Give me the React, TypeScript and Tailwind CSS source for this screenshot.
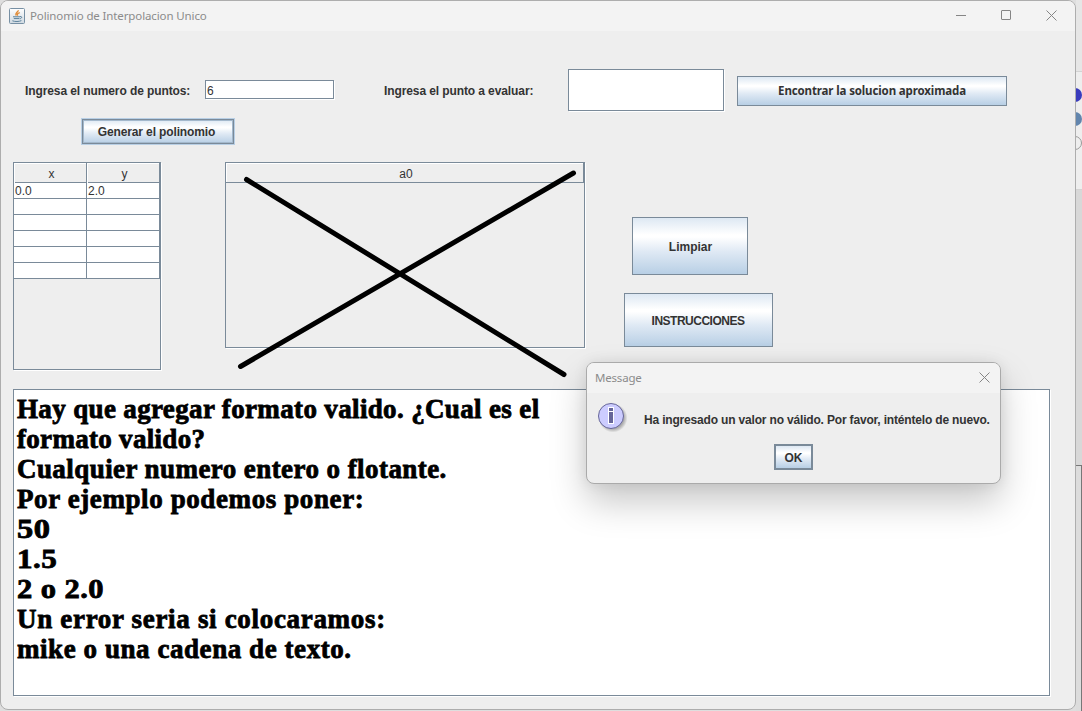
import type { ReactNode } from "react";

const sans = "font-['Liberation_Sans',Arial,sans-serif]";
const system = "font-['Noto_Sans','Open_Sans',sans-serif]";

function MetalButton({ className, children }: { className: string; children: ReactNode }) {
  return (
    <button
      className={`flex shrink-0 items-center justify-center whitespace-nowrap border border-[#7a8a99] bg-[linear-gradient(to_bottom,#dde8f3_0%,#ffffff_30%,#ffffff_34%,#dfe9f4_60%,#b8cfe5_100%)] font-bold text-[#333] ${className}`}
    >
      {children}
    </button>
  );
}

function JavaIcon() {
  return (
    <svg width="16" height="16" viewBox="0 0 16 16" className="shrink-0" fill="none">
      <defs>
        <linearGradient id="tile" x1="0" y1="0" x2="0" y2="1">
          <stop offset="0" stopColor="#fff" />
          <stop offset="1" stopColor="#cfd9e1" />
        </linearGradient>
      </defs>
      <rect x="0.5" y="0.5" width="15" height="15" rx="1" fill="url(#tile)" stroke="#7790a4" />
      <path d="M9.4 2.2C9.4 4 5.4 4.9 7.3 7.6M10.8 4.6C8.2 5.3 8 6.2 8.8 7.6" stroke="#e08a35" strokeWidth="1.3" />
      <path d="M4 8.8H11M4.8 10.6H10.4M11 8.6C13.4 8 13.2 10.4 10.8 10.8M3.4 12.8C6 13.8 10 13.7 12.4 12.6" stroke="#5b819b" strokeWidth="1" />
    </svg>
  );
}

function CloseIcon() {
  return (
    <svg width="11" height="11" viewBox="0 0 11 11" fill="none" stroke="#858585">
      <path d="M0.5 0.5L10.5 10.5M10.5 0.5L0.5 10.5" />
    </svg>
  );
}

function InfoIcon() {
  return (
    <svg width="32" height="32" viewBox="0 0 32 32" className="shrink-0">
      <defs>
        <radialGradient id="shade">
          <stop offset="0.75" stopColor="#777" stopOpacity="0.55" />
          <stop offset="1" stopColor="#777" stopOpacity="0" />
        </radialGradient>
      </defs>
      <circle cx="16" cy="16" r="14.5" fill="url(#shade)" />
      <circle cx="14" cy="14" r="12.5" fill="#ccccff" stroke="#666699" />
      <rect x="11.5" y="5.5" width="5" height="4" fill="#666699" stroke="#fff" />
      <rect x="11.5" y="9.5" width="5" height="12" fill="#666699" stroke="#fff" />
    </svg>
  );
}

const notes = [
  { text: "Hay que agregar formato valido. ¿Cual es el", fit: "tracking-[0.35px]" },
  { text: "formato valido?", fit: "tracking-[0.3px]" },
  { text: "Cualquier numero entero o flotante.", fit: "tracking-[0.43px]" },
  { text: "Por ejemplo podemos poner:", fit: "tracking-[0.6px]" },
  { text: "50", fit: "scale-x-[1.2] tracking-[0.4px]" },
  { text: "1.5", fit: "scale-x-[1.15] tracking-[0.4px]" },
  { text: "2 o 2.0", fit: "scale-x-[1.13] tracking-[0.4px]" },
  { text: "Un error seria si colocaramos:", fit: "tracking-[0.68px]" },
  { text: "mike o una cadena de texto.", fit: "tracking-[0.56px]" },
];

const points = [["0.0", "2.0"], ["", ""], ["", ""], ["", ""], ["", ""], ["", ""]];

function PointsTable() {
  return (
    <div className="h-[208px] w-[148px] shrink-0 border border-[#7a8a99] shadow-[1px_1px_0_#fff]">
      <div className="grid h-[20px] grid-cols-[73px_73px] border-b border-[#7a8a99] text-center leading-[22px]">
        <div className="border-r border-[#7a8a99] pl-[3px] shadow-[inset_1px_1px_0_#fff]">x</div>
        <div className="border-r border-[#7a8a99] pl-[3px] shadow-[inset_1px_1px_0_#fff]">y</div>
      </div>
      {points.map((row, i) => (
        <div key={i} className="grid h-4 grid-cols-[73px_73px] bg-white leading-[17px]">
          {row.map((cell, j) => (
            <div key={j} className="h-4 border-b border-r border-[#7a8a99] pl-px">{cell}</div>
          ))}
        </div>
      ))}
    </div>
  );
}

function MessageDialog() {
  return (
    <div className="absolute left-[586px] top-[362px] flex h-[122px] w-[415px] flex-col overflow-hidden rounded-lg border border-[#aaa] bg-[#eeeeee] shadow-[0_18px_36px_rgba(0,0,0,0.22),0_0_14px_rgba(0,0,0,0.08)]">
      <div className="flex h-[30px] shrink-0 items-center justify-between bg-[#f3f3f3] pl-2 pr-[10px]">
        <span className={`${system} text-[11.5px] tracking-[-0.2px] text-[#8b8b8b]`}>Message</span>
        <span className="pb-[2px]"><CloseIcon /></span>
      </div>
      <div className="flex h-[51px] items-start pl-[10px] pt-[9px]">
        <InfoIcon />
        <span className="ml-[15px] mt-[10px] whitespace-nowrap text-[12px] font-bold leading-4 tracking-[-0.175px]">
          Ha ingresado un valor no válido. Por favor, inténtelo de nuevo.
        </span>
      </div>
      <MetalButton className="ml-[187px] h-[26px] w-[39px] border-2 pt-px">OK</MetalButton>
    </div>
  );
}

export default function App() {
  return (
    <div className={`relative flex h-[711px] w-[1082px] overflow-hidden bg-[#dedede] text-[12px] text-[#333] ${sans}`}>
      <main className="z-10 flex h-[710px] w-[1076px] shrink-0 flex-col overflow-hidden rounded-lg border border-[#adadad] bg-[#eeeeee]">
        <header className="flex h-[30px] shrink-0 items-center bg-[#f3f3f3] pl-2">
          <JavaIcon />
          <h1 className={`ml-[5px] text-[11.5px] tracking-[-0.12px] text-[#8b8b8b] ${system}`}>Polinomio de Interpolacion Unico</h1>
          <div className="ml-auto flex items-center gap-[35px] pb-px pr-[18px]">
            <span className="h-px w-[10px] bg-[#858585]" />
            <span className="mb-px size-[10px] rounded-[1px] border border-[#858585]" />
            <CloseIcon />
          </div>
        </header>

        <div className="mt-[38px] flex h-[42px] shrink-0 items-center pl-6">
          <label className="w-[180px] pt-px font-bold tracking-[-0.1px]">Ingresa el numero de puntos:</label>
          <div className="mb-px h-[19px] w-[129px] border border-[#7a8a99] bg-white pl-px leading-[20px] shadow-[1px_1px_0_#fff]">6</div>
          <label className="ml-[50px] w-[184px] pt-px font-bold tracking-[-0.1px]">Ingresa el punto a evaluar:</label>
          <div className="h-[42px] w-[156px] border border-[#7a8a99] bg-white shadow-[1px_1px_0_#fff]" />
          <MetalButton className={`ml-[13px] mt-[2px] h-[30px] w-[270px] text-[11.5px] tracking-[-0.13px] ${system}`}>Encontrar la solucion aproximada</MetalButton>
        </div>

        <MetalButton className="ml-[81px] mt-2 h-[25px] w-[152px] pr-[3px] tracking-[-0.13px] shadow-[0_0_0_1px_#b8cfe5,inset_0_0_0_1px_#a3b8cc]">Generar el polinomio</MetalButton>

        <div className="mt-[18px] flex h-[227px] shrink-0 items-start pl-3">
          <PointsTable />
          <div className="ml-16 h-[186px] w-[360px] shrink-0 border border-[#7a8a99] shadow-[1px_1px_0_#fff]">
            <div className="h-[20px] border-b border-r border-[#7a8a99] pl-[3px] text-center leading-[22px] shadow-[inset_1px_1px_0_#fff]">a0</div>
          </div>
          <div className="ml-[39px] mt-[55px] flex w-[149px] flex-col gap-[18px]">
            <MetalButton className="ml-2 h-[58px] w-[116px] pl-px pt-[2px]">Limpiar</MetalButton>
            <MetalButton className="h-[54px] w-[149px] pr-px pt-[2px] tracking-[-0.5px]">INSTRUCCIONES</MetalButton>
          </div>
        </div>

        <section className="ml-3 h-[307px] w-[1037px] shrink-0 border border-[#7a8a99] bg-white pl-[3px] pt-1 font-['Liberation_Serif','Times_New_Roman',serif] text-[27px] font-bold leading-[30px] text-black shadow-[1px_1px_0_#fff] [-webkit-text-stroke:0.8px_#000]">
          {notes.map((line) => (
            <p key={line.text} className={`h-[30px] w-fit origin-left whitespace-nowrap ${line.fit}`}>{line.text}</p>
          ))}
        </section>
      </main>

      <aside className="flex w-[6px] shrink-0 flex-col">
        <div className="h-[71px] bg-[#e6e6e6]" />
        <div className="flex h-[119px] flex-col items-end gap-[10px] border-y border-[#d3d3d3] bg-[#eeeeee] pt-4">
          <i className="size-[14px] rounded-full bg-[#393bbd]" />
          <i className="size-[14px] rounded-full bg-[#6285ad]" />
          <i className="size-[14px] rounded-full border border-[#999]" />
        </div>
        <div className="h-[275px] bg-[#d8d8d8]" />
        <div className="grow border-r border-t border-[#777] bg-[#dcdcdc]" />
      </aside>

      <svg className="pointer-events-none absolute left-[225px] top-[160px] z-20" width="360" height="225" fill="none" stroke="#000" strokeWidth="5" strokeLinecap="round">
        <path d="M21.5 19.5L339 214.5M348.5 13L15.5 206.5" />
      </svg>
      <div className="absolute z-30">
        <MessageDialog />
      </div>
    </div>
  );
}
